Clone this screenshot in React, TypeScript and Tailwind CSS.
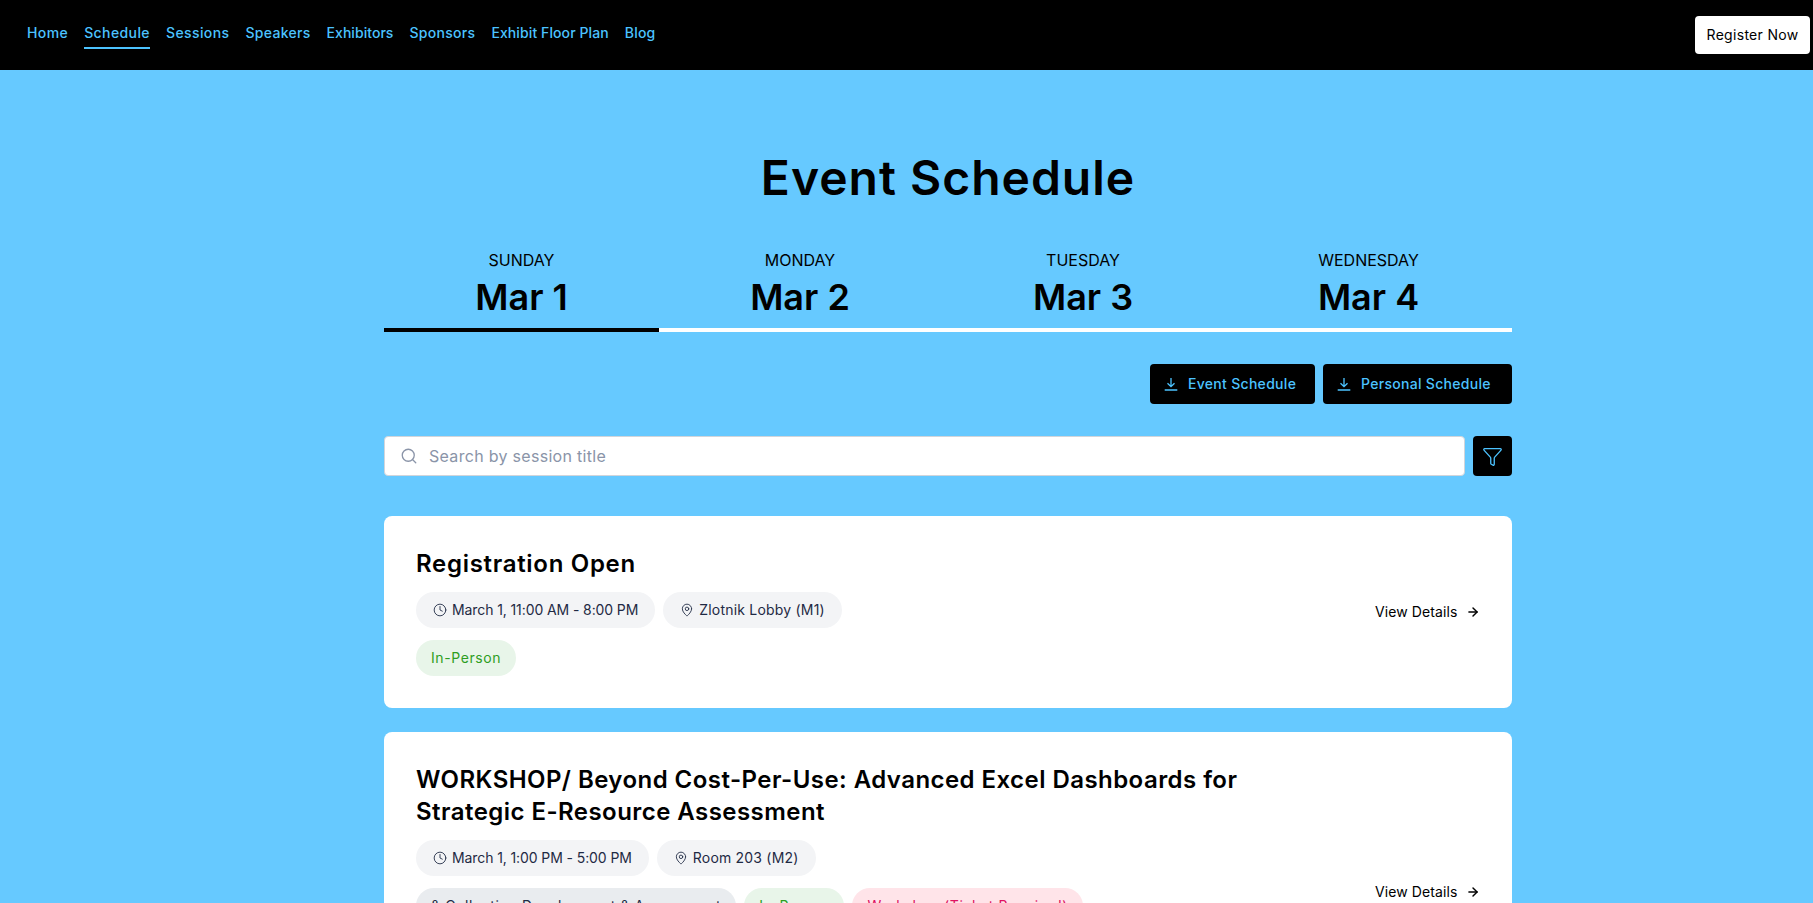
import { ArrowRight, Clock, Filter, MapPin, Search } from "lucide-react";

const nav = [
  { t: "Home", c: "tracking-[0.4px]" },
  { t: "Schedule", c: "tracking-[0.4px]" },
  { t: "Sessions", c: "tracking-[0.4px]" },
  { t: "Speakers", c: "tracking-[0.3px]" },
  { t: "Exhibitors", c: "tracking-[0.05px]" },
  { t: "Sponsors", c: "tracking-[0.3px]" },
  { t: "Exhibit Floor Plan", c: "tracking-[0.1px]" },
  { t: "Blog", c: "tracking-[0.2px]" },
];
const days = [
  { d: "SUNDAY", m: "Mar 1", w: "w-[275px]", active: true },
  { d: "MONDAY", m: "Mar 2", w: "w-[282px]", active: false },
  { d: "TUESDAY", m: "Mar 3", w: "w-[284px]", active: false },
  { d: "WEDNESDAY", m: "Mar 4", w: "w-[287px]", active: false },
];

function Pill({ icon, text }: { icon: "clock" | "pin"; text: string }) {
  const Icon = icon === "clock" ? Clock : MapPin;
  const tracking = icon === "clock" ? "tracking-[-0.1px]" : "tracking-[0.2px]";
  return (
    <span className={`flex h-9 items-center gap-[5px] rounded-full bg-[#f3f4f6] px-[17px] text-sm text-[#1f2a44] ${tracking}`}>
      <Icon size={14} strokeWidth={1.5} />
      {text}
    </span>
  );
}

function Tag({ text, cls }: { text: string; cls: string }) {
  return <span className={`flex h-9 items-center rounded-full px-[15px] text-sm tracking-[0.6px] ${cls}`}>{text}</span>;
}

function ViewDetails() {
  return (
    <span className="flex w-[105px] shrink-0 items-center justify-between text-sm tracking-[0.1px] text-black">
      View Details <ArrowRight size={14} strokeWidth={2.5} />
    </span>
  );
}

function DlIcon() {
  return (
    <svg width="14" height="14" viewBox="0 0 14 14" fill="none" stroke="currentColor" strokeWidth="1.3" className="shrink-0">
      <path d="M7 1v8.5M3.5 6.2 7 9.7l3.5-3.5M.7 13h12.6" />
    </svg>
  );
}

function DlButton({ text, w }: { text: string; w: string }) {
  return (
    <button className={`flex h-10 items-center gap-[10px] rounded bg-black pl-[14px] text-sm font-medium tracking-[0.3px] text-[#4cc3ff] ${w}`}>
      <DlIcon />
      {text}
    </button>
  );
}

export default function App() {
  return (
    <div className="h-screen overflow-hidden bg-[#66c9ff] text-black" style={{ fontFamily: "Inter, 'Noto Sans', sans-serif" }}>
      <header className="flex h-[70px] items-center justify-between bg-black pl-[27px] pr-[3px]">
        <nav className="flex gap-4 text-sm font-medium text-[#4cc3ff]">
          {nav.map((n) => (
            <span
              key={n.t}
              className={`${n.c} ${n.t === "Schedule" ? "border-b-2 border-[#4cc3ff] pb-1 pt-[2px]" : "pb-[6px] pt-[2px]"}`}
            >
              {n.t}
            </span>
          ))}
        </nav>
        <button className="h-[38px] w-[115px] rounded bg-white text-sm tracking-[0.3px] text-black">Register Now</button>
      </header>
      <main className="ml-[384px] w-[1128px]">
        <h1 className="mt-[72px] text-center text-5xl font-semibold leading-[72px] tracking-[1px]">Event Schedule</h1>
        <div className="mt-[34px] flex">
          {days.map((x) => (
            <div key={x.d} className={`${x.w} border-b-4 pb-[11px] text-center ${x.active ? "border-black" : "border-white"}`}>
              <div className="text-base leading-6">{x.d}</div>
              <div className="mt-[5px] text-4xl font-semibold leading-10">{x.m}</div>
            </div>
          ))}
        </div>
        <div className="mt-8 flex justify-end gap-2">
          <DlButton text="Event Schedule" w="w-[165px]" />
          <DlButton text="Personal Schedule" w="w-[189px]" />
        </div>
        <div className="mt-8 flex gap-2">
          <div className="flex h-10 flex-1 items-center gap-[11px] rounded border border-[#d1d5db] bg-white pl-[15px] text-base tracking-[0.3px] text-[#8a94a8]">
            <Search size={18} strokeWidth={1.75} />
            Search by session title
          </div>
          <button className="flex h-10 w-[39px] items-center justify-center rounded bg-black text-[#4cc3ff]">
            <Filter size={21} strokeWidth={1.5} />
          </button>
        </div>
        <section className="mt-10 flex h-[192px] items-center justify-between rounded-lg bg-white px-8">
          <div className="self-start pt-8">
            <h2 className="text-2xl font-semibold leading-8 tracking-[0.7px]">Registration Open</h2>
            <div className="mt-3 flex gap-2">
              <Pill icon="clock" text="March 1, 11:00 AM - 8:00 PM" />
              <Pill icon="pin" text="Zlotnik Lobby (M1)" />
            </div>
            <div className="mt-3 flex gap-2">
              <Tag text="In-Person" cls="bg-[#e8f5e9] text-[#2e9e1f]" />
            </div>
          </div>
          <ViewDetails />
        </section>
        <section className="mt-6 flex h-[320px] items-center justify-between rounded-lg bg-white px-8">
          <div className="w-[840px] self-start pt-8">
            <h2 className="text-2xl font-semibold leading-8 tracking-[0.45px]">
              WORKSHOP/ Beyond Cost-Per-Use: Advanced Excel Dashboards for Strategic E-Resource Assessment
            </h2>
            <div className="mt-3 flex gap-2">
              <Pill icon="clock" text="March 1, 1:00 PM - 5:00 PM" />
              <Pill icon="pin" text="Room 203 (M2)" />
            </div>
            <div className="mt-3 flex gap-2">
              <Tag text="& Collection Development & Assessment" cls="bg-[#e9ecef] text-[#1f2a44]" />
              <Tag text="In-Person" cls="bg-[#e8f5e9] text-[#2e9e1f]" />
              <Tag text="Workshop (Ticket Required)" cls="bg-[#ffe4e9] text-[#e0115f]" />
            </div>
          </div>
          <ViewDetails />
        </section>
      </main>
    </div>
  );
}
